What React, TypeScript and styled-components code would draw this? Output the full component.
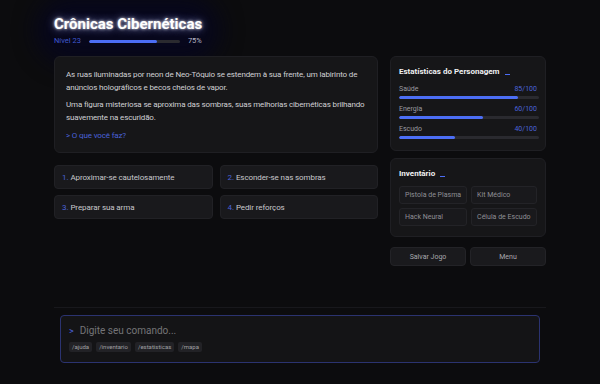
import React from "react";
import styled, { createGlobalStyle } from "styled-components";

const Global = createGlobalStyle`
  html, body { margin: 0; padding: 0; background: #0c0c0e; }
  body { font-family: Roboto, "Noto Sans", sans-serif; color: #c9c9cc; width: 600px; height: 384px; overflow: hidden; }
  * { box-sizing: border-box; }
`;

const Page = styled.div`
  width: 600px;
  height: 384px;
  padding: 0 54px;
  display: flex;
  flex-direction: column;
`;

const Header = styled.header`
  align-self: flex-start;
  margin-top: 14px;
  display: flex;
  flex-direction: column;
  gap: 2px;
  background: #07071c;
  border-radius: 20px;
  box-shadow: 0 0 22px 18px #07071c;
`;

const Title = styled.h1`
  margin: 0;
  font-size: 15px;
  line-height: 20px;
  font-weight: 700;
  color: #ffffff;
  white-space: nowrap;
  text-shadow: 0 0 3px rgba(255, 255, 255, 0.9), 0 0 8px rgba(170, 180, 255, 0.8);
`;

const LevelRow = styled.div`
  display: flex;
  align-items: center;
  gap: 8px;
  font-size: 7.5px;
  line-height: 10px;
  white-space: nowrap;
`;

const Level = styled.span`
  color: #3f58d0;
`;

const Track = styled.div<{ $w: number }>`
  width: ${(p) => p.$w}px;
  height: 3px;
  background: #2a2a2f;
  border-radius: 2px;
  overflow: hidden;
  flex-shrink: 0;
`;

const Fill = styled.div`
  height: 100%;
  background: #4c6ef5;
  border-radius: 2px;
`;

const Pct = styled.span`
  color: #b8b8c8;
`;

const Main = styled.div`
  display: grid;
  grid-template-columns: 324px 156px;
  column-gap: 12px;
  margin-top: 10px;
  align-items: start;
`;

const Col = styled.div`
  display: flex;
  flex-direction: column;
`;

const Card = styled.section`
  background: #161618;
  border: 1px solid #1f1f23;
  border-radius: 6px;
`;

const Story = styled(Card)`
  padding: 11px 6px 10px 11px;
  font-size: 8px;
  line-height: 13px;
  letter-spacing: -0.15px;
  color: #d0d0d4;
`;

const Para = styled.p`
  margin: 0 0 4px;
`;

const Prompt = styled.p`
  margin: 5px 0 0;
  color: #4a62d8;
`;

const Choices = styled.div`
  display: grid;
  grid-template-columns: 1fr 1fr;
  gap: 6px 7px;
  margin-top: 12px;
`;

const Choice = styled.button`
  height: 24px;
  background: #19191c;
  border: 1px solid #212125;
  border-radius: 4px;
  color: #c7c7cb;
  font-family: inherit;
  font-size: 8px;
  letter-spacing: -0.1px;
  text-align: left;
  padding: 0 7px;
  display: flex;
  align-items: center;
`;

const Num = styled.span`
  color: #4a62d8;
  margin-right: 2px;
`;

const SideCard = styled(Card)`
  padding: 9px 8px 11px;
`;

const CardTitle = styled.h2`
  margin: 0;
  font-size: 8px;
  line-height: 12px;
  font-weight: 700;
  color: #f0f0f2;
  display: flex;
  align-items: baseline;
  white-space: nowrap;
`;

const Cursor = styled.span`
  display: inline-block;
  width: 5px;
  height: 1.5px;
  background: #4c6ef5;
  margin-left: 5px;
  transform: translateY(1px);
`;

const StatList = styled.div`
  display: flex;
  flex-direction: column;
  gap: 5px;
  margin-top: 6px;
`;

const Stat = styled.div`
  display: flex;
  flex-direction: column;
  gap: 2px;
`;

const StatHead = styled.div`
  display: flex;
  justify-content: space-between;
  font-size: 7px;
  line-height: 10px;
  color: #9a9aa0;
`;

const StatVal = styled.span`
  color: #4a62d8;
`;

const Inventory = styled(SideCard)`
  margin-top: 7px;
  padding-bottom: 10px;
`;

const Items = styled.div`
  display: grid;
  grid-template-columns: 1fr 1fr;
  gap: 4px;
  margin-top: 6px;
`;

const Item = styled.div`
  height: 18px;
  background: #19191c;
  border: 1px solid #232327;
  border-radius: 3px;
  font-size: 7px;
  color: #8f8f95;
  display: flex;
  align-items: center;
  padding: 0 5px;
  white-space: nowrap;
`;

const Actions = styled.div`
  display: grid;
  grid-template-columns: 1fr 1fr;
  gap: 4px;
  margin-top: 10px;
`;

const ActionBtn = styled.button`
  height: 19px;
  background: #1a1a1d;
  border: 1px solid #232327;
  border-radius: 4px;
  color: #a9a9ae;
  font-family: inherit;
  font-size: 7px;
`;

const Footer = styled.footer`
  margin-top: auto;
  margin-bottom: 21px;
  border-top: 1px solid #18181c;
  padding: 7px 6px 0;
`;

const InputBox = styled.div`
  height: 48px;
  background: #141416;
  border: 1px solid #2b3370;
  border-radius: 4px;
  padding: 9px 8px;
  display: flex;
  flex-direction: column;
  gap: 5px;
`;

const InputLine = styled.div`
  display: flex;
  align-items: center;
  gap: 6px;
  font-size: 10px;
  line-height: 12px;
`;

const Caret = styled.span`
  color: #4a62d8;
  font-size: 9px;
`;

const Placeholder = styled.span`
  color: #747478;
`;

const Tags = styled.div`
  display: flex;
  gap: 4px;
`;

const Tag = styled.span`
  height: 10px;
  padding: 0 3px;
  background: #222226;
  border-radius: 2px;
  font-size: 6px;
  line-height: 10px;
  color: #a0a0a4;
`;

const stats = [
  { name: "Saúde", v: 85 },
  { name: "Energia", v: 60 },
  { name: "Escudo", v: 40 },
];

const choices = [
  "Aproximar-se cautelosamente",
  "Esconder-se nas sombras",
  "Preparar sua arma",
  "Pedir reforços",
];

const items = ["Pistola de Plasma", "Kit Médico", "Hack Neural", "Célula de Escudo"];

export default function App() {
  return (
    <>
      <Global />
      <Page>
        <Header>
          <Title>Crônicas Cibernéticas</Title>
          <LevelRow>
            <Level>Nível 23</Level>
            <Track $w={91}>
              <Fill style={{ width: "75%" }} />
            </Track>
            <Pct>75%</Pct>
          </LevelRow>
        </Header>
        <Main>
          <Col>
            <Story>
              <Para>
                As ruas iluminadas por neon de Neo-Tóquio se estendem à sua frente, um labirinto de
                anúncios holográficos e becos cheios de vapor.
              </Para>
              <Para>
                Uma figura misteriosa se aproxima das sombras, suas melhorias cibernéticas brilhando
                suavemente na escuridão.
              </Para>
              <Prompt>&gt; O que você faz?</Prompt>
            </Story>
            <Choices>
              {choices.map((c, i) => (
                <Choice key={c}>
                  <Num>{i + 1}.</Num>
                  {c}
                </Choice>
              ))}
            </Choices>
          </Col>
          <Col>
            <SideCard>
              <CardTitle>
                Estatísticas do Personagem<Cursor />
              </CardTitle>
              <StatList>
                {stats.map((s) => (
                  <Stat key={s.name}>
                    <StatHead>
                      <span>{s.name}</span>
                      <StatVal>{s.v}/100</StatVal>
                    </StatHead>
                    <Track $w={140}>
                      <Fill style={{ width: `${s.v}%` }} />
                    </Track>
                  </Stat>
                ))}
              </StatList>
            </SideCard>
            <Inventory>
              <CardTitle>
                Inventário<Cursor />
              </CardTitle>
              <Items>
                {items.map((it) => (
                  <Item key={it}>{it}</Item>
                ))}
              </Items>
            </Inventory>
            <Actions>
              <ActionBtn>Salvar Jogo</ActionBtn>
              <ActionBtn>Menu</ActionBtn>
            </Actions>
          </Col>
        </Main>
        <Footer>
          <InputBox>
            <InputLine>
              <Caret>&gt;</Caret>
              <Placeholder>Digite seu comando...</Placeholder>
            </InputLine>
            <Tags>
              {["/ajuda", "/inventario", "/estatisticas", "/mapa"].map((t) => (
                <Tag key={t}>{t}</Tag>
              ))}
            </Tags>
          </InputBox>
        </Footer>
      </Page>
    </>
  );
}
